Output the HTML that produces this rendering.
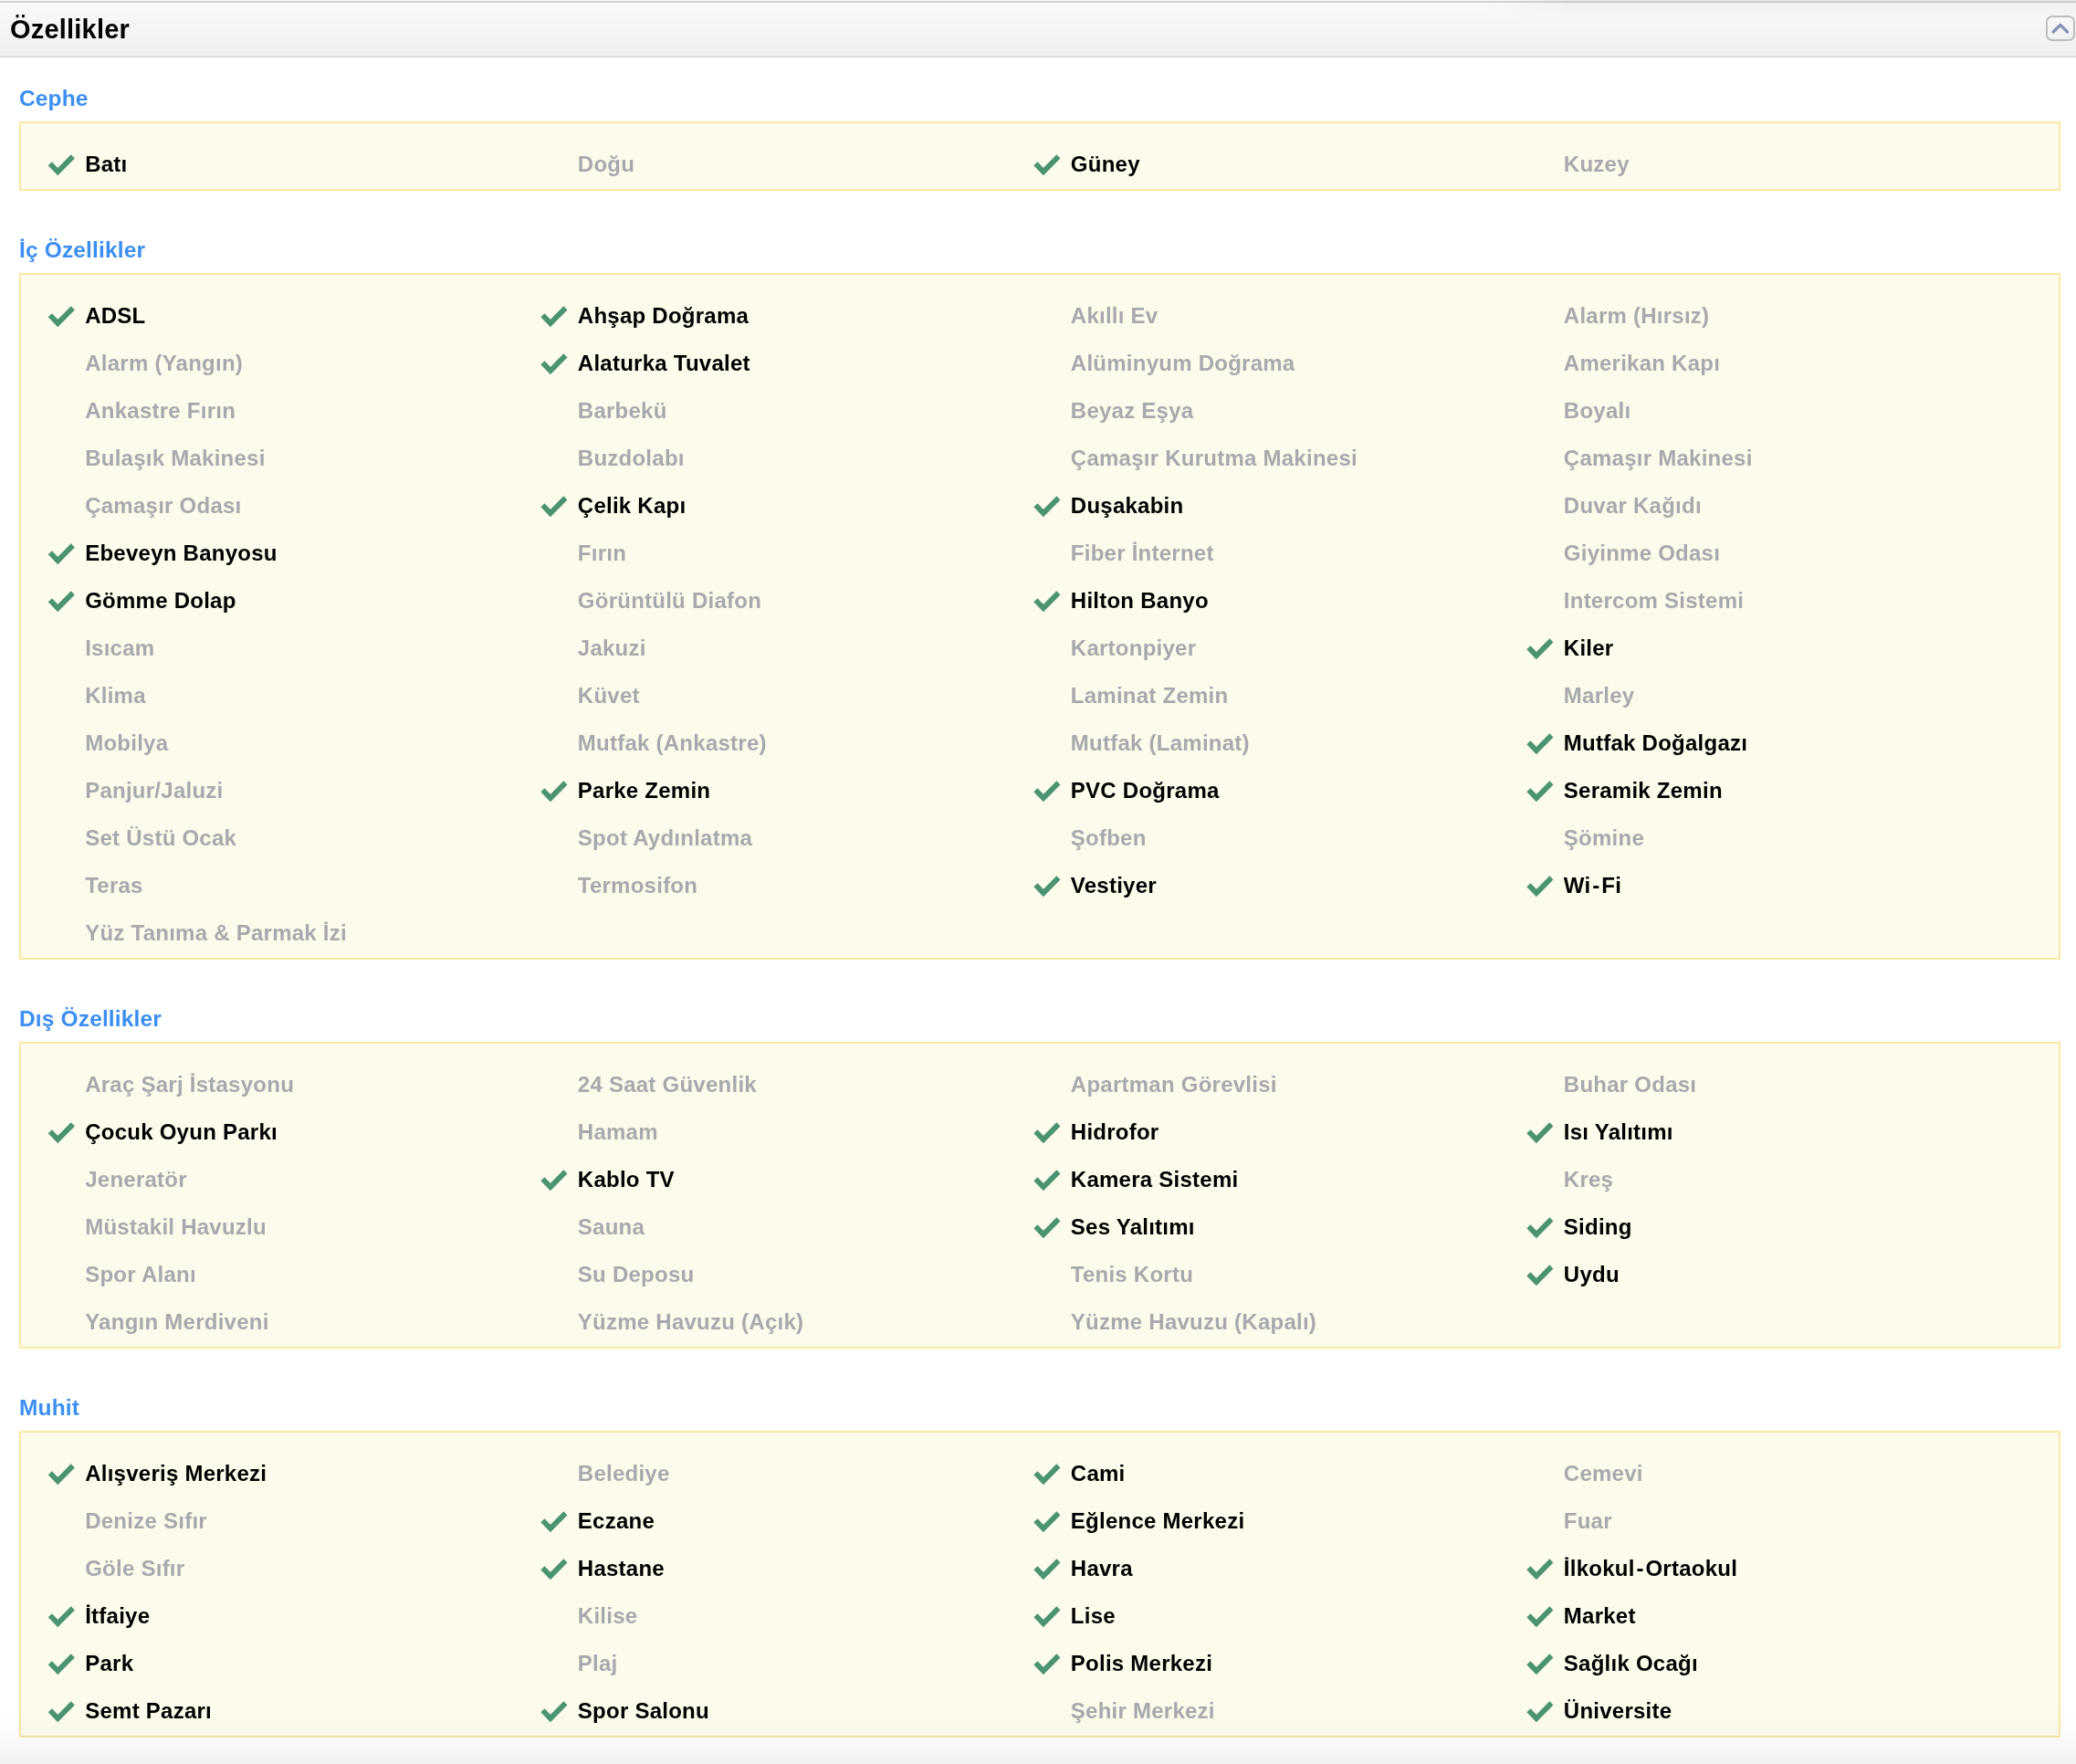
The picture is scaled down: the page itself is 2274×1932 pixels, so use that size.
<!DOCTYPE html>
<html><head><meta charset="utf-8"><style>
html,body{margin:0;padding:0;}
body{width:2274px;height:1932px;overflow:hidden;position:relative;background:#fff;font-family:"Liberation Sans",sans-serif;font-weight:bold;}
.hdr{position:absolute;left:0;top:0;width:2274px;height:63px;background:linear-gradient(90deg,#f8f8f8 0px,#f8f8f8 1620px,#ececec 1720px);}
.hdr .tl{position:absolute;left:0;top:1px;width:2274px;height:2px;background:linear-gradient(90deg,#d3d3d3 0px,#d3d3d3 1620px,#cbcbcb 1720px);}
.hdr .bg{position:absolute;left:0;top:3px;width:2274px;height:58px;background:linear-gradient(#fafafa 0%,#efefef 100%);}
.hdr .sh{position:absolute;left:1620px;top:3px;width:654px;height:18px;background:linear-gradient(rgba(0,0,0,0.035),rgba(0,0,0,0));-webkit-mask-image:linear-gradient(90deg,transparent 0,#000 100px);}
.hdr .bl{position:absolute;left:0;top:61px;width:2274px;height:2px;background:#dcdcdc;}
.t{position:absolute;white-space:nowrap;}
.L{position:absolute;left:0;top:0;width:2274px;height:1932px;will-change:transform;}
.title{color:#000;letter-spacing:0.2px;}
.h{color:#3b8ff2;letter-spacing:0.15px;}
.box{position:absolute;left:21px;width:2232px;border:2px solid #f9e8a3;background:#fdfbec;}
.hy{margin:0 1.8px;}
.on{color:#000;letter-spacing:0.25px;}
.off{color:#a7a9ae;letter-spacing:0.25px;}
svg.ck{position:absolute;overflow:visible;}
.btn{position:absolute;left:2241px;top:17px;width:28px;height:24px;border:2px solid #bdbdbd;border-radius:7px;}
.fade{position:absolute;left:0;top:1870px;width:2274px;height:62px;background:linear-gradient(rgba(0,0,0,0) 0%,rgba(0,0,0,0.012) 40%,rgba(0,0,0,0.035) 75%,rgba(0,0,0,0.055) 100%);}
</style></head><body>

<div class="hdr"><div class="tl"></div><div class="bg"></div><div class="sh"></div><div class="bl"></div></div>
<div class="L">
<div class="t title" style="left:11px;top:11.95px;font-size:29.0px;line-height:40px">Özellikler</div>
<div class="btn"></div>
<svg class="ck" style="left:0;top:0" width="2274" height="63"><path d="M2249 35 L2256.8 27.3 L2264.6 35" fill="none" stroke="#8391b5" stroke-width="3.2" stroke-linecap="round" stroke-linejoin="round"/></svg>
<div class="t h" style="left:21px;top:87.51px;font-size:24.5px;line-height:40px">Cephe</div>
<div class="box" style="top:133px;height:72px"></div>
<div class="t on" style="left:93.2px;top:159.88px;font-size:24.0px;line-height:40px">Batı</div>
<div class="t off" style="left:632.8px;top:159.88px;font-size:24.0px;line-height:40px">Doğu</div>
<div class="t on" style="left:1172.8px;top:159.88px;font-size:24.0px;line-height:40px">Güney</div>
<div class="t off" style="left:1712.8px;top:159.88px;font-size:24.0px;line-height:40px">Kuzey</div>
<div class="t h" style="left:21px;top:253.51px;font-size:24.5px;line-height:40px">İç Özellikler</div>
<div class="box" style="top:299px;height:748px"></div>
<div class="t on" style="left:93.2px;top:325.88px;font-size:24.0px;line-height:40px">ADSL</div>
<div class="t on" style="left:632.8px;top:325.88px;font-size:24.0px;line-height:40px">Ahşap Doğrama</div>
<div class="t off" style="left:1172.8px;top:325.88px;font-size:24.0px;line-height:40px">Akıllı Ev</div>
<div class="t off" style="left:1712.8px;top:325.88px;font-size:24.0px;line-height:40px">Alarm (Hırsız)</div>
<div class="t off" style="left:93.2px;top:377.88px;font-size:24.0px;line-height:40px">Alarm (Yangın)</div>
<div class="t on" style="left:632.8px;top:377.88px;font-size:24.0px;line-height:40px">Alaturka Tuvalet</div>
<div class="t off" style="left:1172.8px;top:377.88px;font-size:24.0px;line-height:40px">Alüminyum Doğrama</div>
<div class="t off" style="left:1712.8px;top:377.88px;font-size:24.0px;line-height:40px">Amerikan Kapı</div>
<div class="t off" style="left:93.2px;top:429.88px;font-size:24.0px;line-height:40px">Ankastre Fırın</div>
<div class="t off" style="left:632.8px;top:429.88px;font-size:24.0px;line-height:40px">Barbekü</div>
<div class="t off" style="left:1172.8px;top:429.88px;font-size:24.0px;line-height:40px">Beyaz Eşya</div>
<div class="t off" style="left:1712.8px;top:429.88px;font-size:24.0px;line-height:40px">Boyalı</div>
<div class="t off" style="left:93.2px;top:481.88px;font-size:24.0px;line-height:40px">Bulaşık Makinesi</div>
<div class="t off" style="left:632.8px;top:481.88px;font-size:24.0px;line-height:40px">Buzdolabı</div>
<div class="t off" style="left:1172.8px;top:481.88px;font-size:24.0px;line-height:40px">Çamaşır Kurutma Makinesi</div>
<div class="t off" style="left:1712.8px;top:481.88px;font-size:24.0px;line-height:40px">Çamaşır Makinesi</div>
<div class="t off" style="left:93.2px;top:533.88px;font-size:24.0px;line-height:40px">Çamaşır Odası</div>
<div class="t on" style="left:632.8px;top:533.88px;font-size:24.0px;line-height:40px">Çelik Kapı</div>
<div class="t on" style="left:1172.8px;top:533.88px;font-size:24.0px;line-height:40px">Duşakabin</div>
<div class="t off" style="left:1712.8px;top:533.88px;font-size:24.0px;line-height:40px">Duvar Kağıdı</div>
<div class="t on" style="left:93.2px;top:585.88px;font-size:24.0px;line-height:40px">Ebeveyn Banyosu</div>
<div class="t off" style="left:632.8px;top:585.88px;font-size:24.0px;line-height:40px">Fırın</div>
<div class="t off" style="left:1172.8px;top:585.88px;font-size:24.0px;line-height:40px">Fiber İnternet</div>
<div class="t off" style="left:1712.8px;top:585.88px;font-size:24.0px;line-height:40px">Giyinme Odası</div>
<div class="t on" style="left:93.2px;top:637.88px;font-size:24.0px;line-height:40px">Gömme Dolap</div>
<div class="t off" style="left:632.8px;top:637.88px;font-size:24.0px;line-height:40px">Görüntülü Diafon</div>
<div class="t on" style="left:1172.8px;top:637.88px;font-size:24.0px;line-height:40px">Hilton Banyo</div>
<div class="t off" style="left:1712.8px;top:637.88px;font-size:24.0px;line-height:40px">Intercom Sistemi</div>
<div class="t off" style="left:93.2px;top:689.88px;font-size:24.0px;line-height:40px">Isıcam</div>
<div class="t off" style="left:632.8px;top:689.88px;font-size:24.0px;line-height:40px">Jakuzi</div>
<div class="t off" style="left:1172.8px;top:689.88px;font-size:24.0px;line-height:40px">Kartonpiyer</div>
<div class="t on" style="left:1712.8px;top:689.88px;font-size:24.0px;line-height:40px">Kiler</div>
<div class="t off" style="left:93.2px;top:741.88px;font-size:24.0px;line-height:40px">Klima</div>
<div class="t off" style="left:632.8px;top:741.88px;font-size:24.0px;line-height:40px">Küvet</div>
<div class="t off" style="left:1172.8px;top:741.88px;font-size:24.0px;line-height:40px">Laminat Zemin</div>
<div class="t off" style="left:1712.8px;top:741.88px;font-size:24.0px;line-height:40px">Marley</div>
<div class="t off" style="left:93.2px;top:793.88px;font-size:24.0px;line-height:40px">Mobilya</div>
<div class="t off" style="left:632.8px;top:793.88px;font-size:24.0px;line-height:40px">Mutfak (Ankastre)</div>
<div class="t off" style="left:1172.8px;top:793.88px;font-size:24.0px;line-height:40px">Mutfak (Laminat)</div>
<div class="t on" style="left:1712.8px;top:793.88px;font-size:24.0px;line-height:40px">Mutfak Doğalgazı</div>
<div class="t off" style="left:93.2px;top:845.88px;font-size:24.0px;line-height:40px">Panjur/Jaluzi</div>
<div class="t on" style="left:632.8px;top:845.88px;font-size:24.0px;line-height:40px">Parke Zemin</div>
<div class="t on" style="left:1172.8px;top:845.88px;font-size:24.0px;line-height:40px">PVC Doğrama</div>
<div class="t on" style="left:1712.8px;top:845.88px;font-size:24.0px;line-height:40px">Seramik Zemin</div>
<div class="t off" style="left:93.2px;top:897.88px;font-size:24.0px;line-height:40px">Set Üstü Ocak</div>
<div class="t off" style="left:632.8px;top:897.88px;font-size:24.0px;line-height:40px">Spot Aydınlatma</div>
<div class="t off" style="left:1172.8px;top:897.88px;font-size:24.0px;line-height:40px">Şofben</div>
<div class="t off" style="left:1712.8px;top:897.88px;font-size:24.0px;line-height:40px">Şömine</div>
<div class="t off" style="left:93.2px;top:949.88px;font-size:24.0px;line-height:40px">Teras</div>
<div class="t off" style="left:632.8px;top:949.88px;font-size:24.0px;line-height:40px">Termosifon</div>
<div class="t on" style="left:1172.8px;top:949.88px;font-size:24.0px;line-height:40px">Vestiyer</div>
<div class="t on" style="left:1712.8px;top:949.88px;font-size:24.0px;line-height:40px">Wi<span class=hy>-</span>Fi</div>
<div class="t off" style="left:93.2px;top:1001.88px;font-size:24.0px;line-height:40px">Yüz Tanıma &amp; Parmak İzi</div>
<div class="t h" style="left:21px;top:1095.51px;font-size:24.5px;line-height:40px">Dış Özellikler</div>
<div class="box" style="top:1141px;height:332px"></div>
<div class="t off" style="left:93.2px;top:1167.88px;font-size:24.0px;line-height:40px">Araç Şarj İstasyonu</div>
<div class="t off" style="left:632.8px;top:1167.88px;font-size:24.0px;line-height:40px">24 Saat Güvenlik</div>
<div class="t off" style="left:1172.8px;top:1167.88px;font-size:24.0px;line-height:40px">Apartman Görevlisi</div>
<div class="t off" style="left:1712.8px;top:1167.88px;font-size:24.0px;line-height:40px">Buhar Odası</div>
<div class="t on" style="left:93.2px;top:1219.88px;font-size:24.0px;line-height:40px">Çocuk Oyun Parkı</div>
<div class="t off" style="left:632.8px;top:1219.88px;font-size:24.0px;line-height:40px">Hamam</div>
<div class="t on" style="left:1172.8px;top:1219.88px;font-size:24.0px;line-height:40px">Hidrofor</div>
<div class="t on" style="left:1712.8px;top:1219.88px;font-size:24.0px;line-height:40px">Isı Yalıtımı</div>
<div class="t off" style="left:93.2px;top:1271.88px;font-size:24.0px;line-height:40px">Jeneratör</div>
<div class="t on" style="left:632.8px;top:1271.88px;font-size:24.0px;line-height:40px">Kablo TV</div>
<div class="t on" style="left:1172.8px;top:1271.88px;font-size:24.0px;line-height:40px">Kamera Sistemi</div>
<div class="t off" style="left:1712.8px;top:1271.88px;font-size:24.0px;line-height:40px">Kreş</div>
<div class="t off" style="left:93.2px;top:1323.88px;font-size:24.0px;line-height:40px">Müstakil Havuzlu</div>
<div class="t off" style="left:632.8px;top:1323.88px;font-size:24.0px;line-height:40px">Sauna</div>
<div class="t on" style="left:1172.8px;top:1323.88px;font-size:24.0px;line-height:40px">Ses Yalıtımı</div>
<div class="t on" style="left:1712.8px;top:1323.88px;font-size:24.0px;line-height:40px">Siding</div>
<div class="t off" style="left:93.2px;top:1375.88px;font-size:24.0px;line-height:40px">Spor Alanı</div>
<div class="t off" style="left:632.8px;top:1375.88px;font-size:24.0px;line-height:40px">Su Deposu</div>
<div class="t off" style="left:1172.8px;top:1375.88px;font-size:24.0px;line-height:40px">Tenis Kortu</div>
<div class="t on" style="left:1712.8px;top:1375.88px;font-size:24.0px;line-height:40px">Uydu</div>
<div class="t off" style="left:93.2px;top:1427.88px;font-size:24.0px;line-height:40px">Yangın Merdiveni</div>
<div class="t off" style="left:632.8px;top:1427.88px;font-size:24.0px;line-height:40px">Yüzme Havuzu (Açık)</div>
<div class="t off" style="left:1172.8px;top:1427.88px;font-size:24.0px;line-height:40px">Yüzme Havuzu (Kapalı)</div>
<div class="t h" style="left:21px;top:1521.51px;font-size:24.5px;line-height:40px">Muhit</div>
<div class="box" style="top:1567px;height:332px"></div>
<div class="t on" style="left:93.2px;top:1593.88px;font-size:24.0px;line-height:40px">Alışveriş Merkezi</div>
<div class="t off" style="left:632.8px;top:1593.88px;font-size:24.0px;line-height:40px">Belediye</div>
<div class="t on" style="left:1172.8px;top:1593.88px;font-size:24.0px;line-height:40px">Cami</div>
<div class="t off" style="left:1712.8px;top:1593.88px;font-size:24.0px;line-height:40px">Cemevi</div>
<div class="t off" style="left:93.2px;top:1645.88px;font-size:24.0px;line-height:40px">Denize Sıfır</div>
<div class="t on" style="left:632.8px;top:1645.88px;font-size:24.0px;line-height:40px">Eczane</div>
<div class="t on" style="left:1172.8px;top:1645.88px;font-size:24.0px;line-height:40px">Eğlence Merkezi</div>
<div class="t off" style="left:1712.8px;top:1645.88px;font-size:24.0px;line-height:40px">Fuar</div>
<div class="t off" style="left:93.2px;top:1697.88px;font-size:24.0px;line-height:40px">Göle Sıfır</div>
<div class="t on" style="left:632.8px;top:1697.88px;font-size:24.0px;line-height:40px">Hastane</div>
<div class="t on" style="left:1172.8px;top:1697.88px;font-size:24.0px;line-height:40px">Havra</div>
<div class="t on" style="left:1712.8px;top:1697.88px;font-size:24.0px;line-height:40px">İlkokul<span class=hy>-</span>Ortaokul</div>
<div class="t on" style="left:93.2px;top:1749.88px;font-size:24.0px;line-height:40px">İtfaiye</div>
<div class="t off" style="left:632.8px;top:1749.88px;font-size:24.0px;line-height:40px">Kilise</div>
<div class="t on" style="left:1172.8px;top:1749.88px;font-size:24.0px;line-height:40px">Lise</div>
<div class="t on" style="left:1712.8px;top:1749.88px;font-size:24.0px;line-height:40px">Market</div>
<div class="t on" style="left:93.2px;top:1801.88px;font-size:24.0px;line-height:40px">Park</div>
<div class="t off" style="left:632.8px;top:1801.88px;font-size:24.0px;line-height:40px">Plaj</div>
<div class="t on" style="left:1172.8px;top:1801.88px;font-size:24.0px;line-height:40px">Polis Merkezi</div>
<div class="t on" style="left:1712.8px;top:1801.88px;font-size:24.0px;line-height:40px">Sağlık Ocağı</div>
<div class="t on" style="left:93.2px;top:1853.88px;font-size:24.0px;line-height:40px">Semt Pazarı</div>
<div class="t on" style="left:632.8px;top:1853.88px;font-size:24.0px;line-height:40px">Spor Salonu</div>
<div class="t off" style="left:1172.8px;top:1853.88px;font-size:24.0px;line-height:40px">Şehir Merkezi</div>
<div class="t on" style="left:1712.8px;top:1853.88px;font-size:24.0px;line-height:40px">Üniversite</div>
</div>
<svg class="ck" style="left:0;top:0" width="2274" height="1932"><path d="M54.80 179.20L63.30 188.05L79.80 171.35M1134.40 179.20L1142.90 188.05L1159.40 171.35M54.80 345.20L63.30 354.05L79.80 337.35M594.40 345.20L602.90 354.05L619.40 337.35M594.40 397.20L602.90 406.05L619.40 389.35M594.40 553.20L602.90 562.05L619.40 545.35M1134.40 553.20L1142.90 562.05L1159.40 545.35M54.80 605.20L63.30 614.05L79.80 597.35M54.80 657.20L63.30 666.05L79.80 649.35M1134.40 657.20L1142.90 666.05L1159.40 649.35M1674.40 709.20L1682.90 718.05L1699.40 701.35M1674.40 813.20L1682.90 822.05L1699.40 805.35M594.40 865.20L602.90 874.05L619.40 857.35M1134.40 865.20L1142.90 874.05L1159.40 857.35M1674.40 865.20L1682.90 874.05L1699.40 857.35M1134.40 969.20L1142.90 978.05L1159.40 961.35M1674.40 969.20L1682.90 978.05L1699.40 961.35M54.80 1239.20L63.30 1248.05L79.80 1231.35M1134.40 1239.20L1142.90 1248.05L1159.40 1231.35M1674.40 1239.20L1682.90 1248.05L1699.40 1231.35M594.40 1291.20L602.90 1300.05L619.40 1283.35M1134.40 1291.20L1142.90 1300.05L1159.40 1283.35M1134.40 1343.20L1142.90 1352.05L1159.40 1335.35M1674.40 1343.20L1682.90 1352.05L1699.40 1335.35M1674.40 1395.20L1682.90 1404.05L1699.40 1387.35M54.80 1613.20L63.30 1622.05L79.80 1605.35M1134.40 1613.20L1142.90 1622.05L1159.40 1605.35M594.40 1665.20L602.90 1674.05L619.40 1657.35M1134.40 1665.20L1142.90 1674.05L1159.40 1657.35M594.40 1717.20L602.90 1726.05L619.40 1709.35M1134.40 1717.20L1142.90 1726.05L1159.40 1709.35M1674.40 1717.20L1682.90 1726.05L1699.40 1709.35M54.80 1769.20L63.30 1778.05L79.80 1761.35M1134.40 1769.20L1142.90 1778.05L1159.40 1761.35M1674.40 1769.20L1682.90 1778.05L1699.40 1761.35M54.80 1821.20L63.30 1830.05L79.80 1813.35M1134.40 1821.20L1142.90 1830.05L1159.40 1813.35M1674.40 1821.20L1682.90 1830.05L1699.40 1813.35M54.80 1873.20L63.30 1882.05L79.80 1865.35M594.40 1873.20L602.90 1882.05L619.40 1865.35M1674.40 1873.20L1682.90 1882.05L1699.40 1865.35" fill="none" stroke="#4a9473" stroke-width="5.8" stroke-linecap="butt" stroke-linejoin="miter"/></svg>
<div class="fade"></div>
</body></html>
